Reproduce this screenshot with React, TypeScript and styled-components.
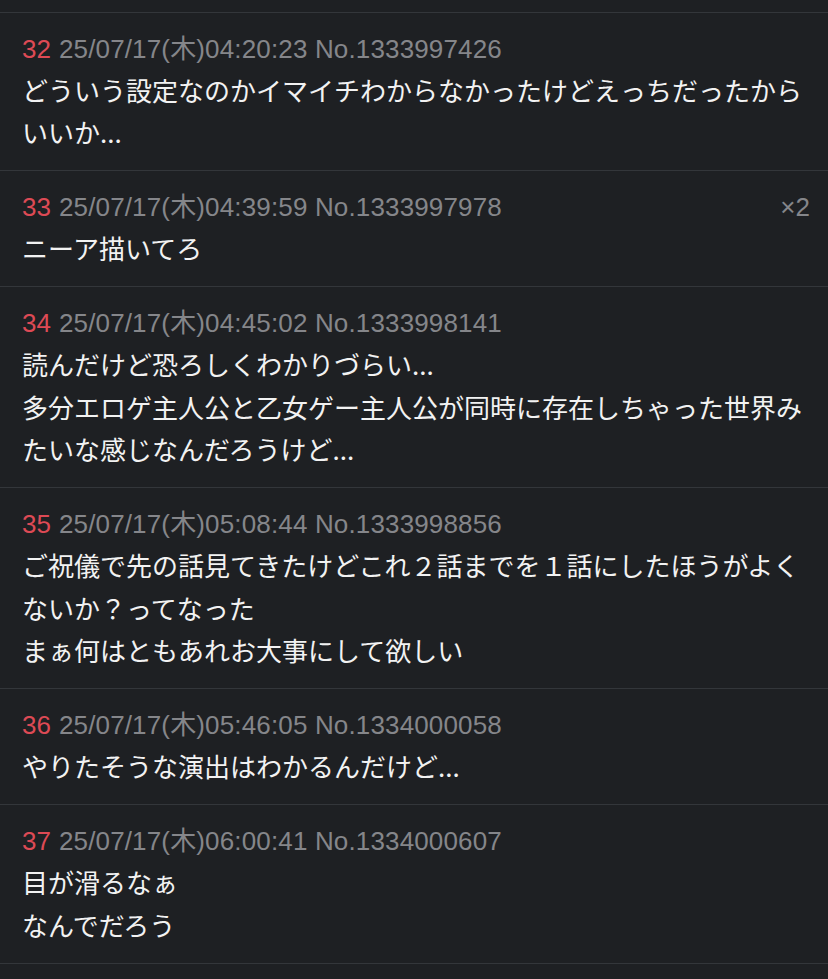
import React from "react";
import styled, { createGlobalStyle } from "styled-components";

const Global = createGlobalStyle`
  html, body {
    margin: 0;
    padding: 0;
    background: #1e2023;
  }
  body {
    width: 828px;
    height: 979px;
    overflow: hidden;
  }
`;

const Thread = styled.div`
  display: flex;
  flex-direction: column;
  width: 828px;
  background: #1e2023;
`;

const PrevTail = styled.div`
  height: 11.5px;
`;

const Post = styled.article`
  border-top: 1px solid #33363a;
  padding: 18px 18px 16.5px 22px;
  display: flex;
  flex-direction: column;
`;

const Header = styled.div`
  display: flex;
  align-items: baseline;
  height: 38px;
  line-height: 36px;
  font-family: "Liberation Sans", "Noto Sans CJK JP", sans-serif;
  font-size: 26px;
  color: #85868a;
  white-space: nowrap;
`;

const Num = styled.span`
  color: #dd4a55;
  margin-right: 8px;
`;

const Meta = styled.span`
  flex: 1;
  letter-spacing: 0.15px;
`;

const Count = styled.span`
  color: #85868a;
`;

const Body = styled.div`
  font-family: "Noto Sans CJK JP", "Noto Sans", sans-serif;
  font-size: 26px;
  line-height: 42.5px;
  color: #f2f2f2;
  white-space: pre-wrap;
  word-break: break-all;
`;

type P = { no: number; date: string; id: string; text: string; count?: string };

const posts: P[] = [
  {
    no: 32,
    date: "25/07/17(木)04:20:23",
    id: "No.1333997426",
    text: "どういう設定なのかイマイチわからなかったけどえっちだったからいいか...",
  },
  {
    no: 33,
    date: "25/07/17(木)04:39:59",
    id: "No.1333997978",
    text: "ニーア描いてろ",
    count: "×2",
  },
  {
    no: 34,
    date: "25/07/17(木)04:45:02",
    id: "No.1333998141",
    text: "読んだけど恐ろしくわかりづらい...\n多分エロゲ主人公と乙女ゲー主人公が同時に存在しちゃった世界みたいな感じなんだろうけど...",
  },
  {
    no: 35,
    date: "25/07/17(木)05:08:44",
    id: "No.1333998856",
    text: "ご祝儀で先の話見てきたけどこれ２話までを１話にしたほうがよくないか？ってなった\nまぁ何はともあれお大事にして欲しい",
  },
  {
    no: 36,
    date: "25/07/17(木)05:46:05",
    id: "No.1334000058",
    text: "やりたそうな演出はわかるんだけど...",
  },
  {
    no: 37,
    date: "25/07/17(木)06:00:41",
    id: "No.1334000607",
    text: "目が滑るなぁ\nなんでだろう",
  },
];

export default function App() {
  return (
    <>
      <Global />
      <Thread>
        <PrevTail />
        {posts.map((p) => (
          <Post key={p.no}>
            <Header>
              <Num>{p.no}</Num>
              <Meta>
                {p.date} {p.id}
              </Meta>
              {p.count && <Count>{p.count}</Count>}
            </Header>
            <Body>{p.text}</Body>
          </Post>
        ))}
        <Post />
      </Thread>
    </>
  );
}
